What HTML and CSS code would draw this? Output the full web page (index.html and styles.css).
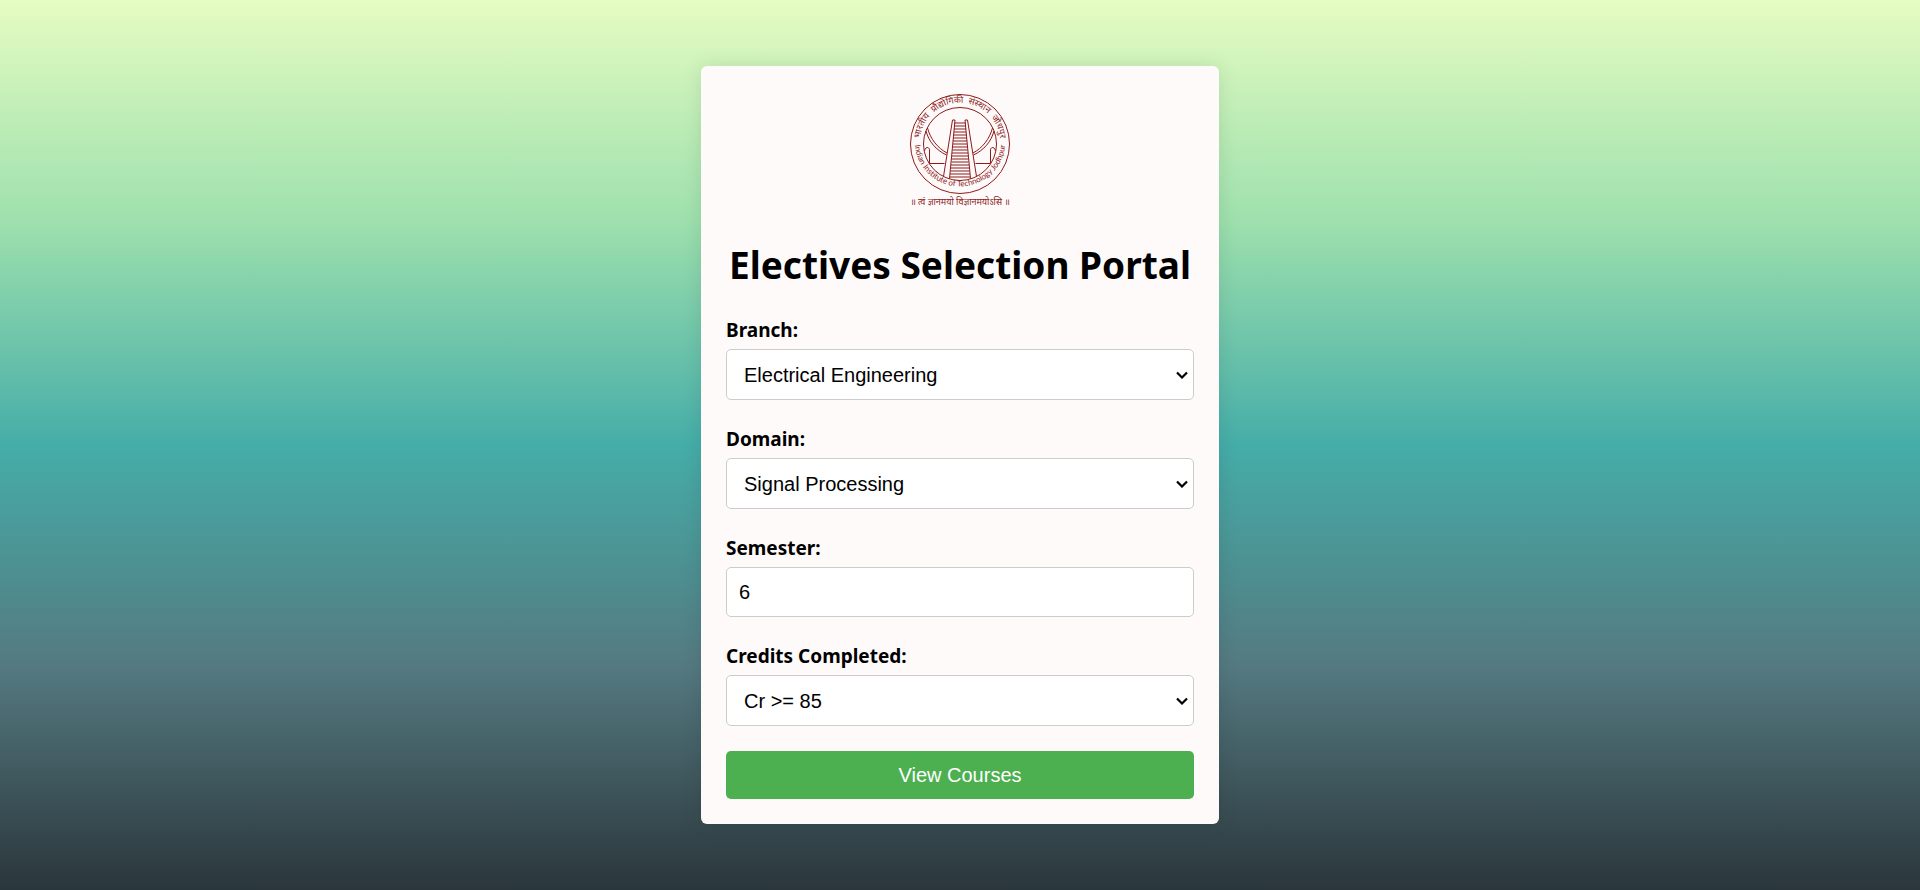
FILE: index.html
```html
<!DOCTYPE html>
<html lang="en">
<head>
<meta charset="utf-8">
<meta name="viewport" content="width=device-width, initial-scale=1">
<title>Electives Selection Portal</title>
<link rel="stylesheet" href="styles.css">
</head>
<body>
<main class="card">
  <svg class="logo" viewBox="0 0 104 120" role="img" aria-label="Indian Institute of Technology Jodhpur">
    <defs>
      <path id="arc-top" d="M12 56a40.2 40.2 0 1 1 80 0"/>
      <path id="arc-bottom" d="M6.600 50a45.400 45.400 0 1 0 90.800 0"/>
    </defs>
    <g class="logo-lines">
      <circle cx="52" cy="53" r="49.500"/>
      <circle cx="52" cy="53" r="36.500"/>
      <path d="M44.500 29h2.500l-5.500 58.500M44.500 29l-9 56.500M59.500 29h-2.500l5.500 58.500M59.500 29l9 56.500"/>
      <path d="M46.500 32h11M46.500 35h11M46 38h12M46 41h12M45.500 44h13M45.500 47h13M45 50h14M45 53h14M44.500 56h15M44.500 59h15M44 62h16M44 65h16M43.500 68h17M43.500 71h17M43 74h18M43 77h18M42.500 80h19M42 83h20M42 86h20"/>
      <path d="M19.500 37c3 11 10 20 19.500 25M18 40c3 11 10 19 20.500 24M84.500 37c-3 11-10 20-19.500 25M86 40c-3 11-10 19-20.500 24"/>
      <path d="M16.500 60c1-5 5-4 5-1v13.500h15M87.500 60c-1-5-5-4-5-1v13.500h-15"/>
    </g>
    <g class="logo-text">
      <text class="ring-hindi"><textPath href="#arc-top" startOffset="50%">भारतीय &nbsp;प्रौद्योगिकी &nbsp;संस्थान &nbsp;जोधपुर</textPath></text>
      <text class="ring-latin"><textPath href="#arc-bottom" startOffset="50%">Indian Institute of Technology Jodhpur</textPath></text>
      <text class="motto" x="52" y="114">॥ त्वं ज्ञानमयो विज्ञानमयोऽसि ॥</text>
    </g>
  </svg>
  <h1 class="title">Electives Selection Portal</h1>
  <form class="form">
    <div class="field">
      <label for="branch">Branch:</label>
      <select id="branch" class="control"><option>Electrical Engineering</option></select>
    </div>
    <div class="field">
      <label for="domain">Domain:</label>
      <select id="domain" class="control"><option>Signal Processing</option></select>
    </div>
    <div class="field">
      <label for="semester">Semester:</label>
      <input id="semester" class="control" type="text" value="6">
    </div>
    <div class="field">
      <label for="credits">Credits Completed:</label>
      <select id="credits" class="control"><option>Cr &gt;= 85</option></select>
    </div>
    <button class="submit" type="button">View Courses</button>
  </form>
</main>
</body>
</html>
```

FILE: styles.css
```css
* {
  box-sizing: border-box;
}

body {
  margin: 0;
  min-height: 100vh;
  display: flex;
  justify-content: center;
  align-items: center;
  font-family: "Segoe UI", "Noto Sans", sans-serif;
  color: #000;
  background: linear-gradient(to bottom, #e5fcc2, #9de0ad, #45ada8, #547980, #2a363b);
}

.card {
  width: 518px;
  max-width: 100%;
  padding: 25px;
  background: #fffafa;
  border-radius: 6px;
  box-shadow: 0 0 20px rgba(0, 0, 0, 0.1);
}

.logo {
  display: block;
  width: 104px;
  height: 120px;
  margin: 0 auto;
}

.logo-lines {
  fill: none;
  stroke: #8b1a1a;
  stroke-width: 1;
}

.logo-text {
  fill: #8b1a1a;
  font-family: "Noto Sans", "Noto Sans Devanagari", sans-serif;
  text-anchor: middle;
}

.ring-hindi {
  font-size: 9px;
}

.ring-latin {
  font-family: Lato, sans-serif;
  font-size: 8px;
}

.motto {
  font-size: 9px;
}

.title {
  margin: 26px 0 23px;
  font-size: 37px;
  line-height: 56px;
  text-align: center;
  white-space: nowrap;
}

.form {
  display: flex;
  flex-direction: column;
  gap: 25px;
}

.field {
  display: flex;
  flex-direction: column;
  gap: 4px;
}

.field label {
  font-size: 19px;
  font-weight: 700;
  line-height: 29px;
}

.control {
  width: 100%;
  height: 51px;
  padding: 12px;
  border: 1px solid #ccc;
  border-radius: 5px;
  background-color: #fff;
  color: #000;
  font-family: Arial, "Liberation Sans", sans-serif;
  font-size: 20px;
}

select.control {
  appearance: none;
  padding: 0 24px 0 17px;
  background-image: url("data:image/svg+xml,%3Csvg xmlns='http://www.w3.org/2000/svg' width='12' height='8' viewBox='0 0 12 8'%3E%3Cpath d='M1 1.500l5 5 5-5' fill='none' stroke='black' stroke-width='2.200'/%3E%3C/svg%3E");
  background-repeat: no-repeat;
  background-position: right 5px center;
}

input.control {
  height: 50px;
}

.submit {
  height: 48px;
  border: 0;
  border-radius: 5px;
  background: #4caf50;
  color: #fff;
  font-family: Arial, "Liberation Sans", sans-serif;
  font-size: 20px;
}
```
